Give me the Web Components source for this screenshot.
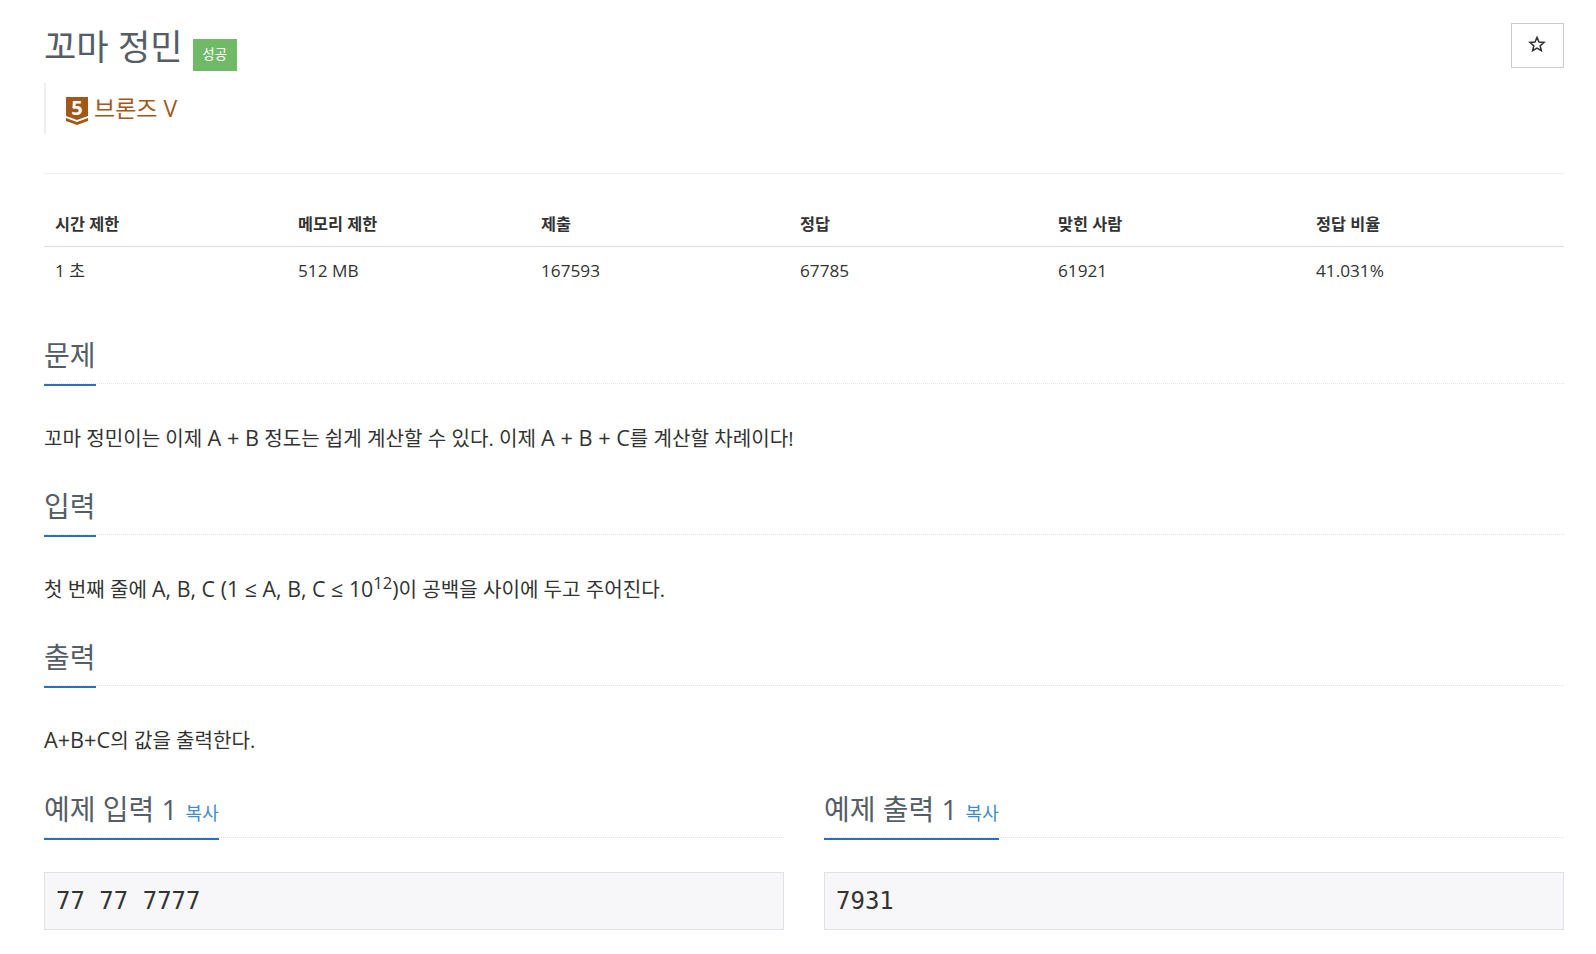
<!DOCTYPE html>
<html lang="ko">
<head>
<meta charset="utf-8">
<style>
	html, body { margin: 0; background: #fff; height: 954px; overflow: hidden; }
	body { font-family: "Open Sans", "Noto Sans CJK KR", sans-serif; color: #333; font-size: 18px; }
	.page { padding: 0 32px 0 44px; }
	.samples { display: grid; grid-template-columns: 1fr 1fr; gap: 40px; margin-top: 1px; }
	.l { font-size: 21.700px; }
	.m { font-size: 21.400px; }
	sup { font-size: 16.500px; line-height: 0; }
</style>
</head>
<body>
<div class="page">
	<problem-head name="꼬마 정민" status="성공" tier="브론즈 V"></problem-head>
	<info-table></info-table>
	<problem-section title="문제">꼬마 정민이는 이제 <span class="l">A + B</span> 정도는 쉽게 계산할 수 있다. 이제 <span class="l">A + B + C</span>를 계산할 차례이다!</problem-section>
	<problem-section title="입력">첫 번째 줄에 <span class="m">A, B, C (1 ≤ A, B, C ≤ 10</span><sup>12</sup><span class="m">)</span>이 공백을 사이에 두고 주어진다.</problem-section>
	<problem-section title="출력"><span class="l">A+B+C</span>의 값을 출력한다.</problem-section>
	<div class="samples">
		<sample-box title="예제 입력 1">77 77 7777</sample-box>
		<sample-box title="예제 출력 1">7931</sample-box>
	</div>
</div>
<script>
(function () {
	const font = '"Open Sans", "Noto Sans CJK KR", sans-serif';

	class ProblemHead extends HTMLElement{
		constructor(){
			super()
			this.attachShadow({ mode: 'open' });
			this.shadowRoot.innerHTML = `
				<style>
					:host{ display: block; font-family: ${font}; border-bottom: 1px solid #eee; padding: 23px 0 39px; }
					.top{ display: flex; justify-content: space-between; align-items: flex-start; height: 60px; }
					h1{ margin: 0; font-size: 35.2px; font-weight: 400; line-height: 46px; color: #555d66; display: flex; align-items: flex-start; }
					.label{ background: #70b966; color: #fff; font-size: 13.5px; line-height: 31px; height: 32px; width: 44px; text-align: center; margin: 16px 0 0 10px; }
					.star{ width: 53px; height: 45px; box-sizing: border-box; border: 1px solid #ccc; display: flex; align-items: center; justify-content: center; }
					.star svg{ margin: 0 1px 3px 0; }
					.tier{ border-left: 2px solid #eee; height: 51px; padding-left: 20px; display: flex; align-items: flex-start; color: #a25818; font-size: 23px; line-height: 50px; }
					.icon{ position: relative; width: 22px; height: 28px; margin: 14px 6px 0 0; }
					.icon svg{ display: block; }
					.icon span{ position: absolute; left: 0; right: 0; top: 0; text-align: center; color: #fff; font-weight: 700; font-size: 20px; line-height: 22px; }
				</style>
				<div class="top">
					<h1><span>${this.getAttribute('name')}</span><span class="label">${this.getAttribute('status')}</span></h1>
					<div class="star">
						<svg width="18" height="18" viewBox="0 0 20 20"><path d="M10 2.600l2.200 5.200 5.600.5-4.300 3.700 1.300 5.500L10 14.600l-4.800 2.900 1.300-5.500-4.300-3.700 5.600-.5z" fill="#fff" stroke="#333" stroke-width="1.700"/></svg>
					</div>
				</div>
				<div class="tier">
					<div class="icon">
						<svg width="22" height="28" viewBox="0 0 22 28">
							<path d="M0 0h22v19l-11 4-11-4z" fill="#a25818"/>
							<path d="M0 21l11 4 11-4v3l-11 4-11-4z" fill="#a25818"/>
						</svg>
						<span>5</span>
					</div>
					<span>${this.getAttribute('tier')}</span>
				</div>`;
		}
	}

	class InfoTable extends HTMLElement{
		constructor(){
			super()
			this.attachShadow({ mode: 'open' });
			const heads = ['시간 제한', '메모리 제한', '제출', '정답', '맞힌 사람', '정답 비율'];
			const vals = ['1 초', '512 MB', '167593', '67785', '61921', '41.031%'];
			this.shadowRoot.innerHTML = `
				<style>
					:host{ display: block; font-family: ${font}; margin: 30px 0 45px; }
					.row{ display: grid; grid-template-columns: 243px 243px 259px 258px 258px 1fr; }
					.row div{ padding-left: 11px; }
					.h{ height: 42px; border-bottom: 1px solid #ddd; font-size: 16.300px; font-weight: 600; line-height: 41px; color: #333; }
					.v{ height: 46px; font-size: 17.200px; line-height: 48px; color: #333; }
				</style>
				<div class="row h">${heads.map(t => `<div>${t}</div>`).join('')}</div>
				<div class="row v">${vals.map(t => `<div>${t}</div>`).join('')}</div>`;
		}
	}

	class SectionHead extends HTMLElement{
		constructor(){
			super()
			this.attachShadow({ mode: 'open' });
			this.shadowRoot.innerHTML = `
				<style>
					:host{ display: block; font-family: ${font}; box-sizing: border-box; border-bottom: 1px dotted #e3e3e3; height: 46px; }
					.t{ display: flex; width: fit-content; align-items: baseline; height: 46px; border-bottom: 2px solid #2f6fb8; line-height: 34px; font-size: 28px; color: #555d66; white-space: pre; }
					a{ font-size: 18px; color: #428bca; margin-left: 8px; }
				</style>
				<div class="t"><span><slot></slot></span></div>`;
			if(this.hasAttribute('copy')){
				const a = document.createElement('a');
				a.textContent = this.getAttribute('copy');
				this.shadowRoot.querySelector('.t').appendChild(a);
			}
		}
	}

	class ProblemSection extends HTMLElement{
		constructor(){
			super()
			this.attachShadow({ mode: 'open' });
			this.shadowRoot.innerHTML = `
				<style>
					:host{ display: block; font-family: ${font}; }
					p{ margin: 0; height: 105px; padding-top: 31px; box-sizing: border-box; line-height: 46px; font-size: 20.100px; color: #333; white-space: nowrap; }
				</style>
				<section-head>${this.getAttribute('title')}</section-head>
				<p><slot></slot></p>`;
		}
	}

	class SampleBox extends HTMLElement{
		constructor(){
			super()
			this.attachShadow({ mode: 'open' });
			this.shadowRoot.innerHTML = `
				<style>
					:host{ display: block; font-family: ${font}; }
					pre{ margin: 34px 0 0; height: 58px; box-sizing: border-box; background: #f7f7f9; border: 1px solid #e1e1e8; padding: 0 11px; line-height: 56px; font-family: "DejaVu Sans Mono", monospace; font-size: 24px; color: #333; }
				</style>
				<section-head copy="복사">${this.getAttribute('title')}</section-head>
				<pre><slot></slot></pre>`;
		}
	}

	window.customElements.define('problem-head', ProblemHead);
	window.customElements.define('info-table', InfoTable);
	window.customElements.define('section-head', SectionHead);
	window.customElements.define('problem-section', ProblemSection);
	window.customElements.define('sample-box', SampleBox);
}
)();
</script>
</body>
</html>
